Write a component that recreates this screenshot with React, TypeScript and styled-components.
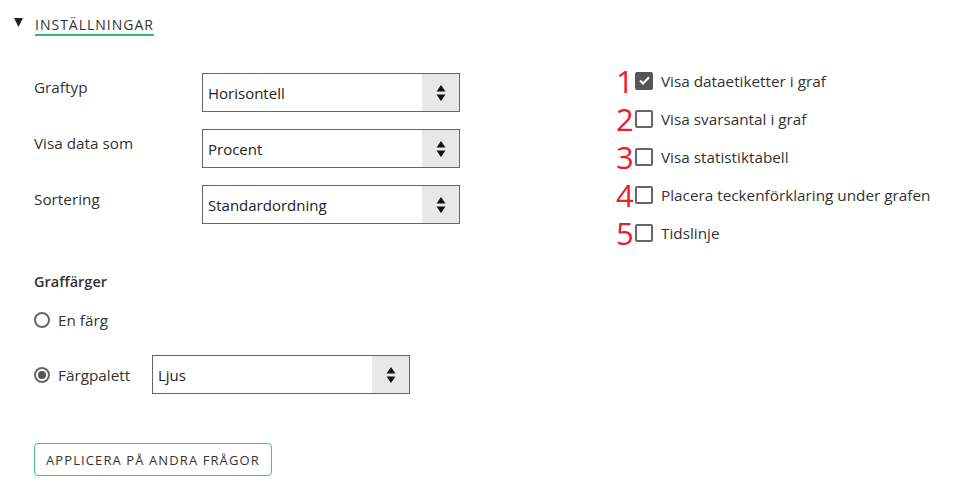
import React from "react";
import styled, { createGlobalStyle } from "styled-components";

const Global = createGlobalStyle`
  html, body { margin: 0; padding: 0; background: #fff; }
  body { font-family: "Open Sans", "Liberation Sans", sans-serif; color: #333; }
  * { box-sizing: border-box; }
`;

const Page = styled.div`
  width: 960px;
  height: 498px;
  padding: 14px 0 0 14px;
`;

const Header = styled.div`
  display: flex;
  align-items: flex-start;
  gap: 12px;
  height: 47px;
`;

const Caret = styled.svg`
  margin-top: 4px;
  flex: none;
`;

const Title = styled.span`
  font-size: 14px;
  letter-spacing: 1px;
  color: #333;
  line-height: 18px;
  padding-top: 2px;
  padding-bottom: 0px;
  border-bottom: 2px solid #2dbe6c;
`;

const Body = styled.div`
  display: flex;
  padding-left: 20px;
`;

const LeftCol = styled.div`
  width: 582px;
  padding-top: 12px;
  display: flex;
  flex-direction: column;
`;

const SelectRows = styled.div`
  display: flex;
  flex-direction: column;
  gap: 17px;
`;

const Row = styled.div`
  display: flex;
  align-items: flex-start;
`;

const Label = styled.div`
  width: 168px;
  font-size: 15.3px;
  line-height: 20px;
  padding-top: 4px;
  color: #333;
`;

const SelectBox = styled.div`
  width: 258px;
  height: 39px;
  border: 1px solid #666;
  display: flex;
  align-items: stretch;
  background: #fff;
`;

const SelectValue = styled.div`
  flex: 1;
  display: flex;
  align-items: center;
  padding-left: 5px;
  font-size: 15px;
  color: #222;
`;

const Arrows = styled.div`
  width: 37px;
  background: #e8e8e8;
  display: flex;
  align-items: center;
  justify-content: center;
`;

const Select: React.FC<{ value: string }> = ({ value }) => (
  <SelectBox>
    <SelectValue>{value}</SelectValue>
    <Arrows>
      <svg width="10" height="20" viewBox="0 0 10 20">
        <path d="M5 2 L9.5 8.5 L0.5 8.5 Z" fill="#111" />
        <path d="M0.5 11.5 L9.5 11.5 L5 18 Z" fill="#111" />
      </svg>
    </Arrows>
  </SelectBox>
);

const SectionTitle = styled.div`
  margin-top: 48px;
  font-size: 14.5px;
  font-weight: 600;
  line-height: 20px;
  color: #333;
`;

const RadioRow = styled.label`
  display: flex;
  align-items: center;
  margin-top: 18px;
  font-size: 15.3px;
  color: #333;
`;

const RadioCircle = styled.span<{ $on?: boolean }>`
  flex: none;
  width: 16px;
  height: 16px;
  border-radius: 50%;
  border: 2px solid #666;
  margin-right: 8px;
  display: flex;
  align-items: center;
  justify-content: center;
  &::after {
    content: "";
    display: ${(p) => (p.$on ? "block" : "none")};
    width: 8px;
    height: 8px;
    border-radius: 50%;
    background: #555;
  }
`;

const RadioLabel = styled.span<{ $w?: number }>`
  width: ${(p) => (p.$w ? `${p.$w}px` : "auto")};
`;

const PaletteRow = styled.div`
  display: flex;
  align-items: center;
  margin-top: 25px;
  font-size: 15.3px;
  color: #333;
`;

const ApplyButton = styled.button`
  margin-top: 49px;
  align-self: flex-start;
  height: 33px;
  padding: 0 11px;
  background: #fff;
  border: 1px solid #4cbf80;
  border-radius: 4px;
  font-family: "Open Sans", "Liberation Sans", sans-serif;
  font-size: 13px;
  letter-spacing: 1.1px;
  color: #333;
`;

const RightCol = styled.div`
  display: flex;
  flex-direction: column;
`;

const CheckRow = styled.div<{ $first?: boolean }>`
  display: flex;
  align-items: center;
  height: ${(p) => (p.$first ? 39 : 38)}px;
`;

const Num = styled.span`
  width: 19px;
  font-size: 31px;
  line-height: 30px;
  color: #e8202c;
  font-family: "Open Sans", "Liberation Sans", sans-serif;
`;

const Box = styled.span<{ $on?: boolean }>`
  flex: none;
  width: 18px;
  height: 18px;
  border-radius: 2px;
  border: 2px solid ${(p) => (p.$on ? "#555" : "#666")};
  background: ${(p) => (p.$on ? "#555" : "#fff")};
  display: flex;
  align-items: center;
  justify-content: center;
  margin-right: 8px;
`;

const CheckText = styled.span`
  font-size: 15.3px;
  color: #333;
`;

const checks = [
  "Visa dataetiketter i graf",
  "Visa svarsantal i graf",
  "Visa statistiktabell",
  "Placera teckenförklaring under grafen",
  "Tidslinje",
];

export default function App() {
  return (
    <>
      <Global />
      <Page>
        <Header>
          <Caret width="9" height="9" viewBox="0 0 9 9">
            <path d="M0 0 L9 0 L4.5 9 Z" fill="#222" />
          </Caret>
          <Title>INSTÄLLNINGAR</Title>
        </Header>
        <Body>
          <LeftCol>
            <SelectRows>
              <Row>
                <Label>Graftyp</Label>
                <Select value="Horisontell" />
              </Row>
              <Row>
                <Label>Visa data som</Label>
                <Select value="Procent" />
              </Row>
              <Row>
                <Label>Sortering</Label>
                <Select value="Standardordning" />
              </Row>
            </SelectRows>
            <SectionTitle>Graffärger</SectionTitle>
            <RadioRow>
              <RadioCircle />
              <RadioLabel>En färg</RadioLabel>
            </RadioRow>
            <PaletteRow>
              <RadioCircle $on />
              <RadioLabel $w={94}>Färgpalett</RadioLabel>
              <Select value="Ljus" />
            </PaletteRow>
            <ApplyButton>APPLICERA PÅ ANDRA FRÅGOR</ApplyButton>
          </LeftCol>
          <RightCol>
            {checks.map((c, i) => (
              <CheckRow key={c} $first={i === 0}>
                <Num>{i + 1}</Num>
                <Box $on={i === 0}>
                  {i === 0 && (
                    <svg width="11" height="9" viewBox="0 0 11 9">
                      <path d="M1 4.5 L4 7.5 L10 1.2" stroke="#fff" strokeWidth="2" fill="none" />
                    </svg>
                  )}
                </Box>
                <CheckText>{c}</CheckText>
              </CheckRow>
            ))}
          </RightCol>
        </Body>
      </Page>
    </>
  );
}
